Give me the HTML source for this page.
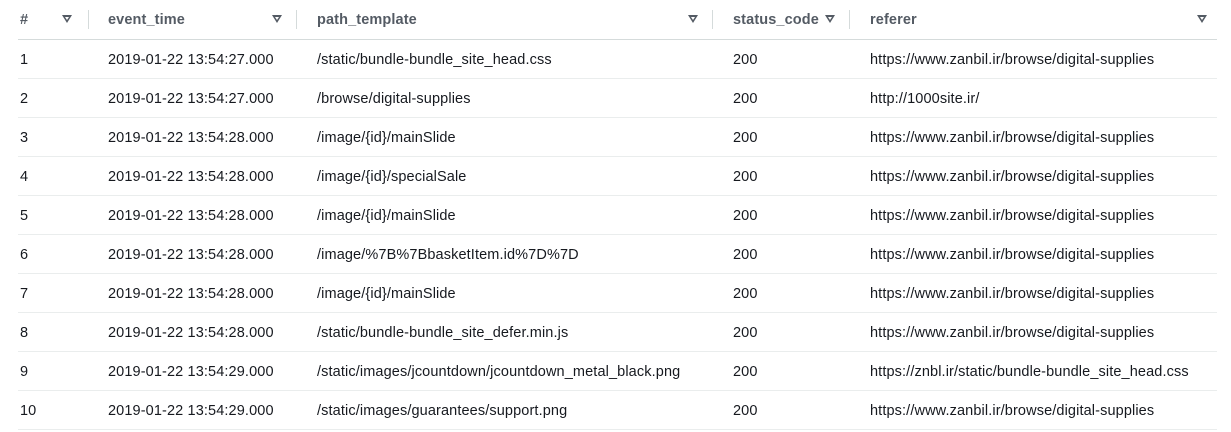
<!DOCTYPE html>
<html><head><style>
body{margin:0;background:#fff;width:1231px;height:424px;overflow:hidden;font-family:"Liberation Sans",sans-serif;font-size:14.5px;letter-spacing:0.12px;color:#16191f;position:relative}
.r{position:absolute;left:18px;width:1199px;height:38px;border-bottom:1px solid #eaeded}
.c{position:absolute;top:0;line-height:41px;white-space:nowrap}
.h{height:39px}
.h .c{font-weight:bold;color:#545b64;line-height:40px}
.s{position:absolute;top:10px;width:1px;height:19px;background:#d5dbdb}
.t{position:absolute;top:15px;width:0;height:0;border-left:5.5px solid transparent;border-right:5.5px solid transparent;border-top:8px solid #545b64}
.t:after{content:"";position:absolute;left:-2.5px;top:-6px;border-left:2.5px solid transparent;border-right:2.5px solid transparent;border-top:3.5px solid #fff}
</style></head><body>
<div class="r h" style="top:0;border-bottom-color:#d5dbdb">
<span class="c" style="left:2px">#</span><i class="t" style="left:44px"></i><i class="s" style="left:70px"></i>
<span class="c" style="left:90px">event_time</span><i class="t" style="left:254px"></i><i class="s" style="left:278px"></i>
<span class="c" style="left:299px">path_template</span><i class="t" style="left:670px"></i><i class="s" style="left:694px"></i>
<span class="c" style="left:715px">status_code</span><i class="t" style="left:807px"></i><i class="s" style="left:831px"></i>
<span class="c" style="left:852px">referer</span><i class="t" style="left:1179px"></i>
</div>
<div class="r" style="top:40px"><span class="c" style="left:2px">1</span><span class="c" style="left:90px">2019-01-22 13:54:27.000</span><span class="c" style="left:299px">/static/bundle-bundle_site_head.css</span><span class="c" style="left:715px">200</span><span class="c" style="left:852px">https://www.zanbil.ir/browse/digital-supplies</span></div>
<div class="r" style="top:79px"><span class="c" style="left:2px">2</span><span class="c" style="left:90px">2019-01-22 13:54:27.000</span><span class="c" style="left:299px">/browse/digital-supplies</span><span class="c" style="left:715px">200</span><span class="c" style="left:852px">http://1000site.ir/</span></div>
<div class="r" style="top:118px"><span class="c" style="left:2px">3</span><span class="c" style="left:90px">2019-01-22 13:54:28.000</span><span class="c" style="left:299px">/image/{id}/mainSlide</span><span class="c" style="left:715px">200</span><span class="c" style="left:852px">https://www.zanbil.ir/browse/digital-supplies</span></div>
<div class="r" style="top:157px"><span class="c" style="left:2px">4</span><span class="c" style="left:90px">2019-01-22 13:54:28.000</span><span class="c" style="left:299px">/image/{id}/specialSale</span><span class="c" style="left:715px">200</span><span class="c" style="left:852px">https://www.zanbil.ir/browse/digital-supplies</span></div>
<div class="r" style="top:196px"><span class="c" style="left:2px">5</span><span class="c" style="left:90px">2019-01-22 13:54:28.000</span><span class="c" style="left:299px">/image/{id}/mainSlide</span><span class="c" style="left:715px">200</span><span class="c" style="left:852px">https://www.zanbil.ir/browse/digital-supplies</span></div>
<div class="r" style="top:235px"><span class="c" style="left:2px">6</span><span class="c" style="left:90px">2019-01-22 13:54:28.000</span><span class="c" style="left:299px">/image/%7B%7BbasketItem.id%7D%7D</span><span class="c" style="left:715px">200</span><span class="c" style="left:852px">https://www.zanbil.ir/browse/digital-supplies</span></div>
<div class="r" style="top:274px"><span class="c" style="left:2px">7</span><span class="c" style="left:90px">2019-01-22 13:54:28.000</span><span class="c" style="left:299px">/image/{id}/mainSlide</span><span class="c" style="left:715px">200</span><span class="c" style="left:852px">https://www.zanbil.ir/browse/digital-supplies</span></div>
<div class="r" style="top:313px"><span class="c" style="left:2px">8</span><span class="c" style="left:90px">2019-01-22 13:54:28.000</span><span class="c" style="left:299px">/static/bundle-bundle_site_defer.min.js</span><span class="c" style="left:715px">200</span><span class="c" style="left:852px">https://www.zanbil.ir/browse/digital-supplies</span></div>
<div class="r" style="top:352px"><span class="c" style="left:2px">9</span><span class="c" style="left:90px">2019-01-22 13:54:29.000</span><span class="c" style="left:299px">/static/images/jcountdown/jcountdown_metal_black.png</span><span class="c" style="left:715px">200</span><span class="c" style="left:852px">https://znbl.ir/static/bundle-bundle_site_head.css</span></div>
<div class="r" style="top:391px"><span class="c" style="left:2px">10</span><span class="c" style="left:90px">2019-01-22 13:54:29.000</span><span class="c" style="left:299px">/static/images/guarantees/support.png</span><span class="c" style="left:715px">200</span><span class="c" style="left:852px">https://www.zanbil.ir/browse/digital-supplies</span></div>
</body></html>
